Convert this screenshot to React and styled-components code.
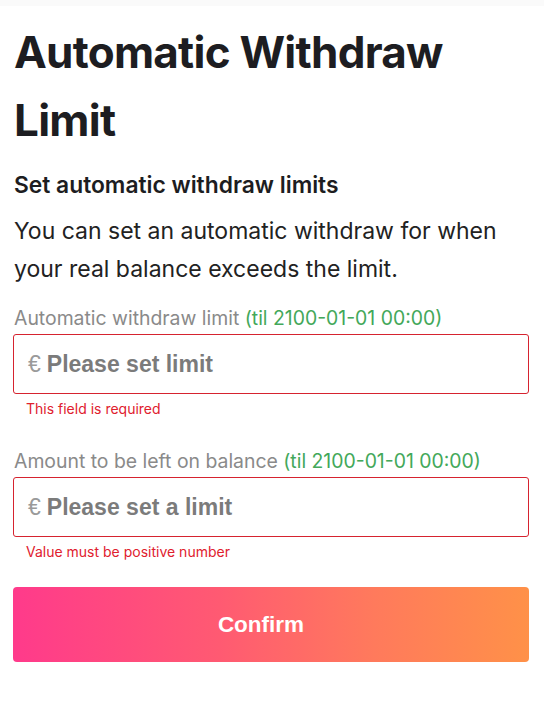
import React from 'react';
import styled, { createGlobalStyle } from 'styled-components';

const GlobalStyle = createGlobalStyle`
  body {
    margin: 0;
    background: #fff;
    font-family: Inter, "Noto Sans", sans-serif;
  }
`;

const Page = styled.div`
  width: 544px;
  min-height: 706px;
  background: #fff;
`;

const TopStrip = styled.div`
  height: 6px;
  background: #fafafa;
`;

const Content = styled.div`
  padding: 0 14px 0 14px;
  display: flex;
  flex-direction: column;
`;

const Title = styled.h1`
  margin: 12px 0 0;
  font-size: 44px;
  line-height: 68px;
  font-weight: 700;
  color: #1d1d21;
  letter-spacing: -0.75px;
`;

const Subtitle = styled.h2`
  margin: 18px 0 0;
  font-size: 22.8px;
  line-height: 26px;
  font-weight: 600;
  color: #1d1d21;
`;

const Text = styled.p`
  margin: 14px 0 0;
  font-size: 23px;
  line-height: 38px;
  color: #222;
`;

const Field = styled.div`
  display: flex;
  flex-direction: column;
  margin-top: ${(p) => p.$top}px;
`;

const Label = styled.div`
  font-size: 19.4px;
  line-height: 24px;
  color: #8a8a8a;
`;

const Until = styled.span`
  color: #43a85a;
`;

const InputBox = styled.div`
  margin-top: 4px;
  height: 60px;
  box-sizing: border-box;
  border: 1px solid #d6232f;
  border-radius: 3px;
  margin-left: -1px;
  margin-right: 1px;
  display: flex;
  align-items: center;
  padding-left: 14px;
  gap: 6px;
  font-family: "Liberation Sans", Arial, sans-serif;
`;

const Currency = styled.span`
  font-size: 23px;
  color: #9a9a9a;
`;

const Placeholder = styled.span`
  font-size: 23px;
  font-weight: 700;
  color: #7b7b7b;
`;

const Error = styled.div`
  margin: 6px 0 0 12px;
  font-size: 14px;
  line-height: 18px;
  color: #e0202e;
`;

const Button = styled.button`
  margin: 26px 1px 0 -1px;
  height: 75px;
  padding: 0 20px 0 0;
  border: none;
  border-radius: 4px;
  background: linear-gradient(90deg, #ff3a8b 0%, #ff5a72 40%, #ff7a5c 70%, #ff9148 100%);
  color: #fff;
  font-family: "Liberation Sans", Arial, sans-serif;
  font-size: 22.5px;
  font-weight: 700;
  cursor: pointer;
`;

const fields = [
  {
    label: 'Automatic withdraw limit',
    placeholder: 'Please set limit',
    error: 'This field is required',
    top: 18,
  },
  {
    label: 'Amount to be left on balance',
    placeholder: 'Please set a limit',
    error: 'Value must be positive number',
    top: 31,
  },
];

const App = () => {
  return (
    <Page>
      <GlobalStyle />
      <TopStrip />
      <Content>
        <Title>Automatic Withdraw Limit</Title>
        <Subtitle>Set automatic withdraw limits</Subtitle>
        <Text>You can set an automatic withdraw for when your real balance exceeds the limit.</Text>
        {fields.map((f) => (
          <Field key={f.label} $top={f.top}>
            <Label>
              {f.label} <Until>(til 2100-01-01 00:00)</Until>
            </Label>
            <InputBox>
              <Currency>€</Currency>
              <Placeholder>{f.placeholder}</Placeholder>
            </InputBox>
            <Error>{f.error}</Error>
          </Field>
        ))}
        <Button>Confirm</Button>
      </Content>
    </Page>
  );
};

export default App;
